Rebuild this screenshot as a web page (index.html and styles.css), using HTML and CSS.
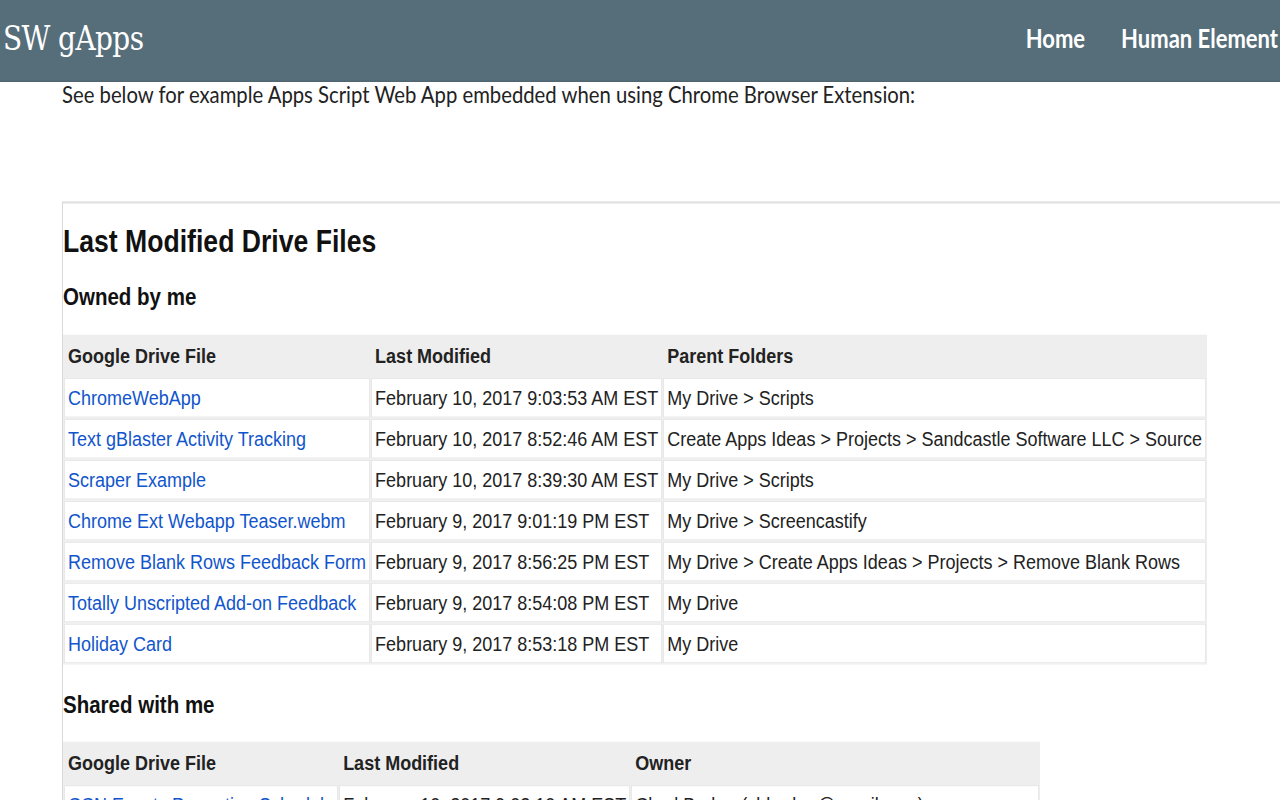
FILE: index.html
```html
<!DOCTYPE html>
<html lang="en">
<head>
<meta charset="utf-8">
<title>SW gApps</title>
<link rel="stylesheet" href="styles.css">
</head>
<body>
<div class="page">
  <header class="topbar">
    <div class="brand">SW gApps</div>
    <nav class="nav">
      <a href="#" class="nav-link">Home</a>
      <a href="#" class="nav-link">Human Element</a>
    </nav>
  </header>
  <main class="content">
    <p class="intro">See below for example Apps Script Web App embedded when using Chrome Browser Extension:</p>
    <section class="frame">
      <h1 class="title">Last Modified Drive Files</h1>
      <h2 class="subtitle">Owned by me</h2>
      <table class="files">
        <thead>
          <tr><th>Google Drive File</th><th>Last Modified</th><th>Parent Folders</th></tr>
        </thead>
        <tbody>
          <tr><td><a href="#">ChromeWebApp</a></td><td>February 10, 2017 9:03:53 AM EST</td><td>My Drive &gt; Scripts</td></tr>
          <tr><td><a href="#">Text gBlaster Activity Tracking</a></td><td>February 10, 2017 8:52:46 AM EST</td><td>Create Apps Ideas &gt; Projects &gt; Sandcastle Software LLC &gt; Source</td></tr>
          <tr><td><a href="#">Scraper Example</a></td><td>February 10, 2017 8:39:30 AM EST</td><td>My Drive &gt; Scripts</td></tr>
          <tr><td><a href="#">Chrome Ext Webapp Teaser.webm</a></td><td>February 9, 2017 9:01:19 PM EST</td><td>My Drive &gt; Screencastify</td></tr>
          <tr><td><a href="#">Remove Blank Rows Feedback Form</a></td><td>February 9, 2017 8:56:25 PM EST</td><td>My Drive &gt; Create Apps Ideas &gt; Projects &gt; Remove Blank Rows</td></tr>
          <tr><td><a href="#">Totally Unscripted Add-on Feedback</a></td><td>February 9, 2017 8:54:08 PM EST</td><td>My Drive</td></tr>
          <tr><td><a href="#">Holiday Card</a></td><td>February 9, 2017 8:53:18 PM EST</td><td>My Drive</td></tr>
        </tbody>
      </table>
      <h2 class="subtitle shared">Shared with me</h2>
      <table class="files">
        <thead>
          <tr><th class="file-col">Google Drive File</th><th>Last Modified</th><th class="owner-col">Owner</th></tr>
        </thead>
        <tbody>
          <tr><td><a href="#">CCN Events Promotion Schedule</a></td><td>February 10, 2017 9:02:10 AM EST</td><td>Chad Barker (cbbarker@gmail.com)</td></tr>
        </tbody>
      </table>
    </section>
  </main>
</div>
</body>
</html>
```

FILE: styles.css
```css
html {
  overflow: hidden;
}

body {
  margin: 0;
  padding: 0;
  background: #fff;
}

.page {
  width: 1280px;
  min-height: 800px;
  transform: scaleY(1.17);
  transform-origin: 0 0;
}

.topbar {
  height: 70px;
  box-sizing: border-box;
  background: #566e79;
  border-bottom: 1px solid #4d636d;
  display: flex;
  align-items: center;
  justify-content: space-between;
  padding: 0 2px 0 3px;
}

.brand {
  font-family: "DejaVu Serif", serif;
  font-size: 28px;
  letter-spacing: -0.6px;
  color: #fff;
  margin-top: -2px;
}

.nav {
  display: flex;
  gap: 36px;
  margin-top: -4px;
}

.nav-link {
  font-family: Lato, "Noto Sans", sans-serif;
  font-size: 22px;
  font-weight: 700;
  color: #fff;
  text-decoration: none;
}

.content {
  padding-left: 62px;
}

.intro {
  margin: 0 0 82px 0;
  font-family: Lato, "Noto Sans", sans-serif;
  font-size: 20.3px;
  line-height: 20px;
  color: #222;
}

.frame {
  width: 1260px;
  border-top: 2px solid #e2e2e2;
  border-left: 1px solid #d9d9d9;
  padding-top: 1px;
  font-family: "Liberation Sans", Arial, sans-serif;
  color: #222;
}

.title {
  font-size: 26.6px;
  line-height: 32px;
  font-weight: 700;
  margin: 15px 0 20px 0;
  color: #111;
}

.subtitle {
  font-size: 20.5px;
  line-height: 24px;
  font-weight: 700;
  margin: 0 0 20px 0;
  color: #111;
}

.subtitle.shared {
  margin-top: 22px;
  margin-bottom: 20px;
}

.files {
  border-collapse: separate;
  border-spacing: 1px;
  background: #eee;
  font-size: 18px;
}

.files th {
  background: #eee;
  border: 1px solid #eee;
  text-align: left;
  font-weight: 700;
  line-height: 33px;
  padding: 0 3px;
  white-space: nowrap;
  color: #222;
}

.files td {
  background: #fff;
  border: 1px solid #e8e8e8;
  line-height: 32px;
  padding: 0 3px;
  white-space: nowrap;
  overflow: hidden;
  color: #222;
}

.files a {
  color: #1155cc;
  text-decoration: none;
}

.file-col {
  width: 262px;
  max-width: 262px;
}

.owner-col {
  width: 400px;
}
```
